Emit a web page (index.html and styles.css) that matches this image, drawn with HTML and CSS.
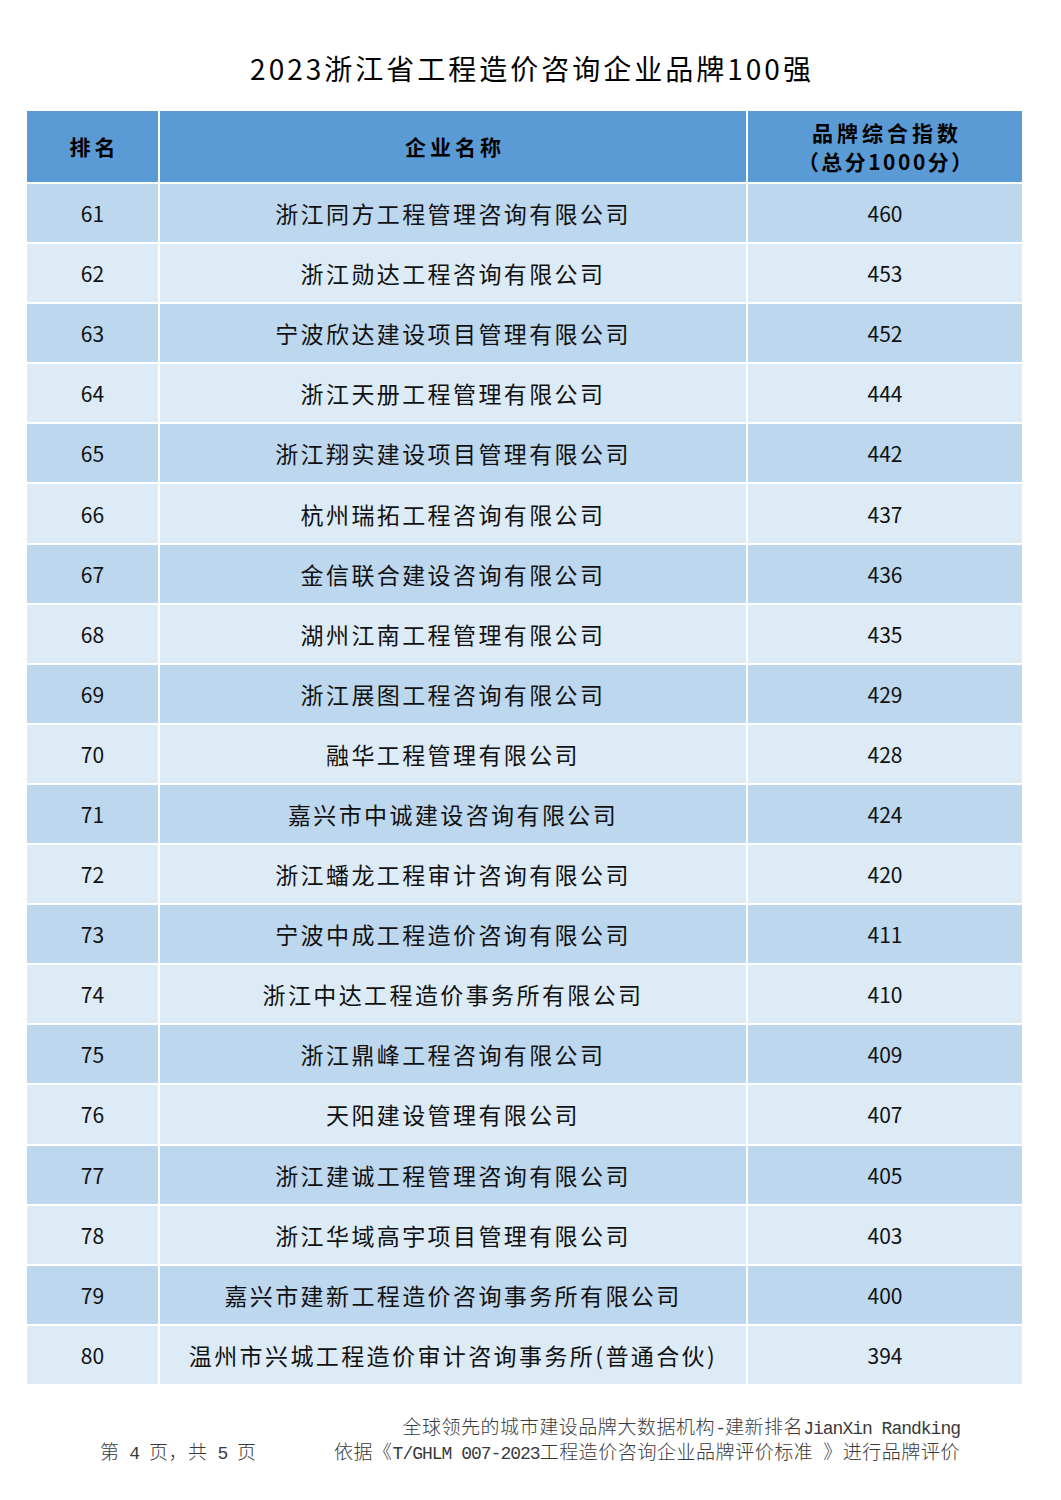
FILE: index.html
```html
<!DOCTYPE html>
<html lang="zh-CN">
<head>
<meta charset="utf-8">
<title>2023浙江省工程造价咨询企业品牌100强</title>
<link rel="stylesheet" href="styles.css">
</head>
<body>
<div class="page">
  <h1 class="title"><span class="tt">2023浙江省工程造价咨询企业品牌100强</span></h1>
  <table class="rank">
    <colgroup>
      <col class="c1"><col class="c2"><col class="c3">
    </colgroup>
    <thead>
      <tr>
        <th><span class="sp">排名</span></th>
        <th><span class="sp">企业名称</span></th>
        <th><span class="sp">品牌综合指数</span><br><span class="l2">（总分1000分）</span></th>
      </tr>
    </thead>
    <tbody>
      <tr><td class="n">61</td><td>浙江同方工程管理咨询有限公司</td><td class="n">460</td></tr>
      <tr><td class="n">62</td><td>浙江勋达工程咨询有限公司</td><td class="n">453</td></tr>
      <tr><td class="n">63</td><td>宁波欣达建设项目管理有限公司</td><td class="n">452</td></tr>
      <tr><td class="n">64</td><td>浙江天册工程管理有限公司</td><td class="n">444</td></tr>
      <tr><td class="n">65</td><td>浙江翔实建设项目管理有限公司</td><td class="n">442</td></tr>
      <tr><td class="n">66</td><td>杭州瑞拓工程咨询有限公司</td><td class="n">437</td></tr>
      <tr><td class="n">67</td><td>金信联合建设咨询有限公司</td><td class="n">436</td></tr>
      <tr><td class="n">68</td><td>湖州江南工程管理有限公司</td><td class="n">435</td></tr>
      <tr><td class="n">69</td><td>浙江展图工程咨询有限公司</td><td class="n">429</td></tr>
      <tr><td class="n">70</td><td>融华工程管理有限公司</td><td class="n">428</td></tr>
      <tr><td class="n">71</td><td>嘉兴市中诚建设咨询有限公司</td><td class="n">424</td></tr>
      <tr><td class="n">72</td><td>浙江蟠龙工程审计咨询有限公司</td><td class="n">420</td></tr>
      <tr><td class="n">73</td><td>宁波中成工程造价咨询有限公司</td><td class="n">411</td></tr>
      <tr><td class="n">74</td><td>浙江中达工程造价事务所有限公司</td><td class="n">410</td></tr>
      <tr><td class="n">75</td><td>浙江鼎峰工程咨询有限公司</td><td class="n">409</td></tr>
      <tr><td class="n">76</td><td>天阳建设管理有限公司</td><td class="n">407</td></tr>
      <tr><td class="n">77</td><td>浙江建诚工程管理咨询有限公司</td><td class="n">405</td></tr>
      <tr><td class="n">78</td><td>浙江华域高宇项目管理有限公司</td><td class="n">403</td></tr>
      <tr><td class="n">79</td><td>嘉兴市建新工程造价咨询事务所有限公司</td><td class="n">400</td></tr>
      <tr><td class="n">80</td><td>温州市兴城工程造价审计咨询事务所(普通合伙)</td><td class="n">394</td></tr>
    </tbody>
  </table>
  <div class="footer">
    <div class="line pageno">第<span class="mono"> 4 </span>页，共<span class="mono"> 5 </span>页</div>
    <div class="source">
      <div class="line">全球领先的城市建设品牌大数据机构<span class="mono">-</span>建新排名<span class="mono">JianXin Randking</span></div>
      <div class="line">依据《<span class="mono">T/GHLM 007-2023</span>工程造价咨询企业品牌评价标准<span class="mono"> </span>》进行品牌评价</div>
    </div>
  </div>
</div>
</body>
</html>
```

FILE: styles.css
```css
html, body {
  margin: 0;
  padding: 0;
  background: #ffffff;
}

body {
  font-family: "Noto Sans CJK SC", "Noto Sans", sans-serif;
  color: #111111;
}

.page {
  width: 1061px;
}

.title {
  margin: 48px 0 0 0;
  height: 40px;
  line-height: 40px;
  font-size: 28px;
  font-weight: 400;
  text-align: center;
  color: #000000;
}

.title .tt {
  letter-spacing: 3px;
  margin-right: -3px;
}

.rank {
  margin: 21px 0 0 25px;
  border-collapse: separate;
  border-spacing: 2px;
  table-layout: fixed;
  width: 999px;
}

.c1 { width: 131px; }
.c2 { width: 586px; }
.c3 { width: 274px; }

.rank th {
  height: 71px;
  padding: 0;
  background: #5b9bd5;
  font-size: 21px;
  font-weight: 700;
  line-height: 29px;
  color: #000000;
  text-align: center;
  vertical-align: middle;
}

.rank th .sp {
  letter-spacing: 4px;
  margin-right: -4px;
}

.rank th .l2 {
  letter-spacing: 2.5px;
  margin-right: -2.5px;
}

.rank td {
  height: 58.1px;
  padding: 0;
  font-size: 23px;
  letter-spacing: 2.4px;
  text-align: center;
  vertical-align: middle;
  color: #111111;
  white-space: nowrap;
}

.rank td.n {
  font-size: 21px;
  letter-spacing: 0;
}

.rank tbody tr:nth-child(odd) td {
  background: #bdd7ee;
}

.rank tbody tr:nth-child(even) td {
  background: #ddebf7;
}

.footer {
  display: flex;
  justify-content: space-between;
  align-items: flex-end;
  margin-top: 27px;
  padding: 0 101px 0 100px;
  font-size: 19px;
  font-weight: 300;
  line-height: 25px;
  letter-spacing: 0.55px;
  color: #3a3a3a;
}

.line {
  height: 25px;
  white-space: nowrap;
}

.source {
  text-align: right;
}

.mono {
  font-family: "Liberation Mono", "DejaVu Sans Mono", monospace;
  font-size: 18px;
  letter-spacing: -1px;
  line-height: 20px;
}
```
